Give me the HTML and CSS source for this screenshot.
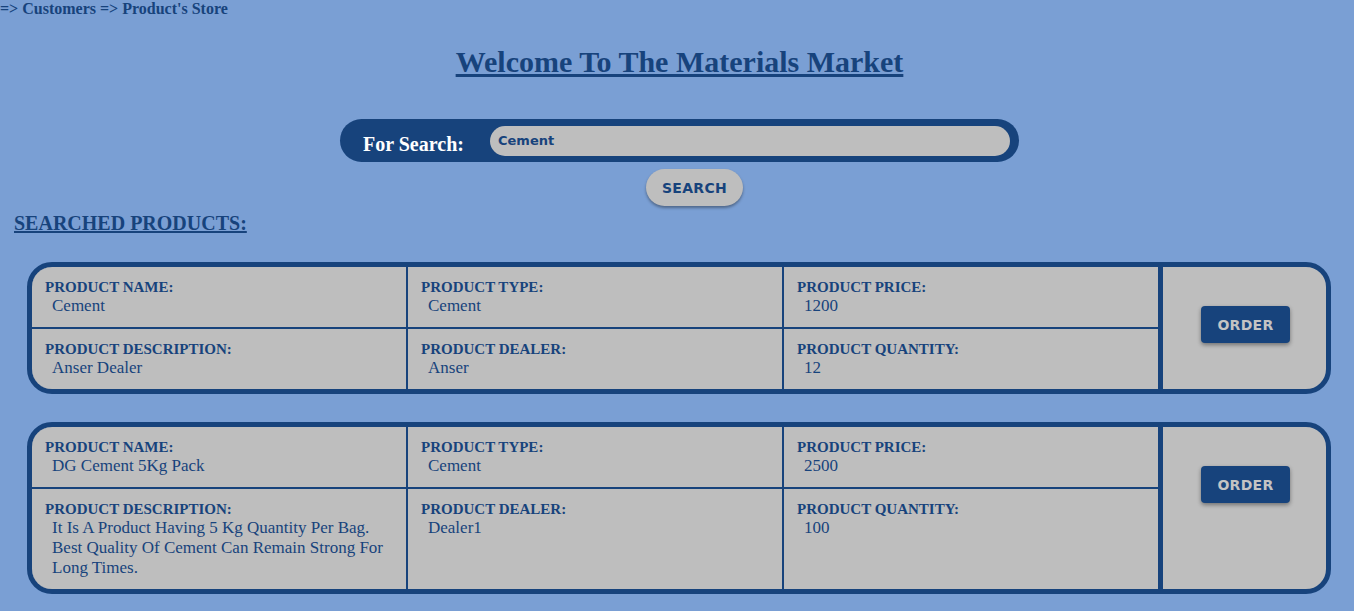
FILE: index.html
```html
<!DOCTYPE html>
<html>
<head>
<meta charset="utf-8">
<title>Product's Store</title>
<link rel="stylesheet" href="styles.css">
</head>
<body>
<div class="crumbs">=&gt; Customers =&gt; Product's Store</div>
<h1 class="title">Welcome To The Materials Market</h1>
<form class="search-form" onsubmit="return false">
  <div class="search-bar">
    <label class="search-label" for="q">For Search:</label>
    <input class="search-input" id="q" type="text" value="Cement">
  </div>
  <button class="search-btn" type="button">SEARCH</button>
</form>
<h2 class="section-title">SEARCHED PRODUCTS:</h2>

<div class="card">
  <div class="fields">
    <div class="cell"><div class="lbl">PRODUCT NAME:</div><div class="val">Cement</div></div>
    <div class="cell"><div class="lbl">PRODUCT TYPE:</div><div class="val">Cement</div></div>
    <div class="cell"><div class="lbl">PRODUCT PRICE:</div><div class="val">1200</div></div>
    <div class="cell"><div class="lbl">PRODUCT DESCRIPTION:</div><div class="val">Anser Dealer</div></div>
    <div class="cell"><div class="lbl">PRODUCT DEALER:</div><div class="val">Anser</div></div>
    <div class="cell"><div class="lbl">PRODUCT QUANTITY:</div><div class="val">12</div></div>
  </div>
  <div class="action"><button class="order-btn" type="button">ORDER</button></div>
</div>

<div class="card">
  <div class="fields">
    <div class="cell"><div class="lbl">PRODUCT NAME:</div><div class="val">DG Cement 5Kg Pack</div></div>
    <div class="cell"><div class="lbl">PRODUCT TYPE:</div><div class="val">Cement</div></div>
    <div class="cell"><div class="lbl">PRODUCT PRICE:</div><div class="val">2500</div></div>
    <div class="cell"><div class="lbl">PRODUCT DESCRIPTION:</div><div class="val">It Is A Product Having 5 Kg Quantity Per Bag. Best Quality Of Cement Can Remain Strong For Long Times.</div></div>
    <div class="cell"><div class="lbl">PRODUCT DEALER:</div><div class="val">Dealer1</div></div>
    <div class="cell"><div class="lbl">PRODUCT QUANTITY:</div><div class="val">100</div></div>
  </div>
  <div class="action"><button class="order-btn" type="button">ORDER</button></div>
</div>
</body>
</html>
```
FILE: styles.css
```css
html, body {
  margin: 0;
  padding: 0;
}
body {
  background: #7a9fd4;
  color: #17437c;
  font-family: "Liberation Serif", "Times New Roman", serif;
  height: 611px;
  overflow: hidden;
}
.crumbs {
  font-weight: bold;
  font-size: 16px;
  line-height: 18px;
}
.title {
  margin: 27px 0 0;
  padding-left: 5px;
  text-align: center;
  font-size: 30px;
  line-height: 34px;
  text-decoration: underline;
  color: #17437c;
}
.search-form {
  margin-top: 40px;
  display: flex;
  flex-direction: column;
  align-items: center;
}
.search-bar {
  width: 679px;
  box-sizing: border-box;
  height: 43px;
  background: #17437c;
  border-radius: 22px;
  display: flex;
  align-items: center;
  padding: 0 9px 0 23px;
  margin-left: 5px;
}
.search-label {
  color: #ffffff;
  font-weight: bold;
  font-size: 20px;
  width: 127px;
  flex: none;
  padding-top: 7px;
}
.search-input {
  flex: 1;
  height: 30px;
  box-sizing: border-box;
  border: none;
  border-radius: 15px;
  background: #bebebe;
  color: #17437c;
  font-family: "DejaVu Sans", Verdana, sans-serif;
  font-weight: bold;
  font-size: 13px;
  padding: 0 8px;
  outline: none;
}
.search-btn {
  margin: 7px 0 0 35px;
  width: 97px;
  height: 37px;
  border: none;
  border-radius: 19px;
  background: #bebebe;
  color: #17437c;
  font-family: "DejaVu Sans", Verdana, sans-serif;
  font-weight: bold;
  font-size: 14px;
  letter-spacing: 0.3px;
  box-shadow: 0 2px 3px rgba(0, 0, 0, 0.35);
  padding: 0;
}
.section-title {
  margin: 6px 0 0 14px;
  font-size: 20px;
  line-height: 23px;
  text-decoration: underline;
}
.card {
  margin: 27px 23px 0 27px;
  border: 5px solid #17437c;
  border-radius: 25px;
  background: #bebebe;
  overflow: hidden;
  display: flex;
}
.card + .card {
  margin-top: 28px;
}
.fields {
  flex: 1;
  display: grid;
  grid-template-columns: 1fr 1fr 1fr;
  gap: 2px;
  background: #17437c;
}
.cell {
  background: #bebebe;
  padding: 12px 12px 11px 13px;
}
.lbl {
  font-weight: bold;
  font-size: 15px;
  line-height: 16px;
}
.val {
  font-size: 17px;
  line-height: 20px;
  margin-top: 1px;
  padding-left: 7px;
  max-width: 340px;
}
.action {
  width: 163px;
  flex: none;
  border-left: 5px solid #17437c;
  display: flex;
  justify-content: center;
  align-items: flex-start;
  padding-top: 39px;
}
.order-btn {
  width: 89px;
  height: 37px;
  border: none;
  border-radius: 4px;
  background: #17437c;
  color: #c4c4c4;
  font-family: "DejaVu Sans", Verdana, sans-serif;
  font-weight: bold;
  font-size: 14px;
  letter-spacing: 0.3px;
  box-shadow: 0 2px 4px rgba(0, 0, 0, 0.4);
  padding: 0;
  margin-left: 2px;
}
```
